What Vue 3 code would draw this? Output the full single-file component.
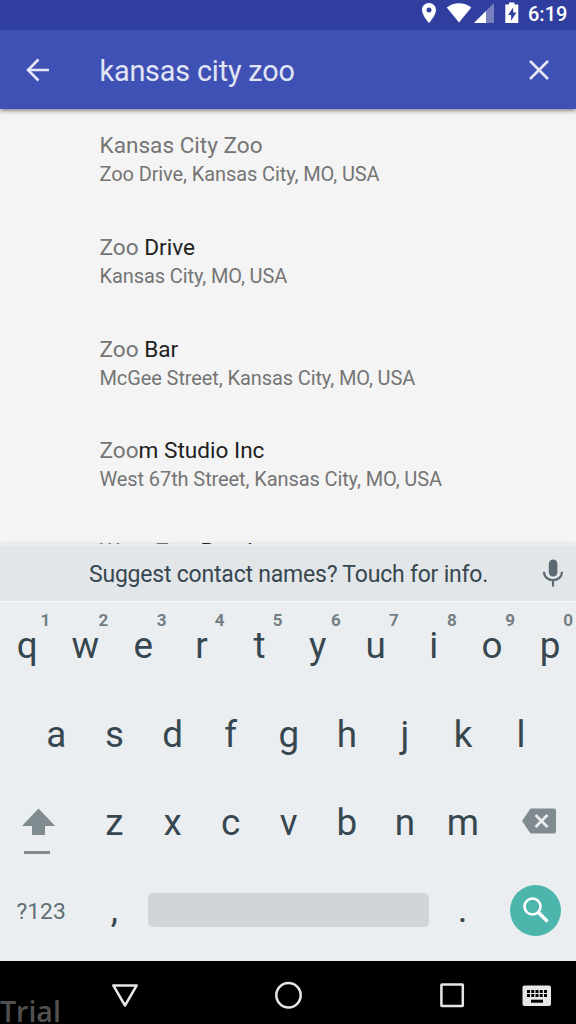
<script setup>
const results = [
  { match: 'Kansas City Zoo', rest: '', address: 'Zoo Drive, Kansas City, MO, USA' },
  { match: 'Zoo ', rest: 'Drive', address: 'Kansas City, MO, USA' },
  { match: 'Zoo ', rest: 'Bar', address: 'McGee Street, Kansas City, MO, USA' },
  { match: 'Zoo', rest: 'm Studio Inc', address: 'West 67th Street, Kansas City, MO, USA' },
  { match: 'West Zoo ', rest: 'Road', address: '' },
]
const topRow = [...'qwertyuiop']
const middleRow = [...'asdfghjkl']
const bottomRow = [...'zxcvbnm']
const hintFor = (i) => (i + 1) % 10
</script>

<template>
  <div class="screen">
    <div class="status">
      <svg class="status-icons" width="128" height="30" viewBox="0 0 128 30">
        <path fill="#fff" fill-rule="evenodd" d="M29 3c-4 0-7 3.100-7 7 0 5.200 7 13 7 13s7-7.800 7-13c0-3.900-3-7-7-7zm0 4.600a2.500 2.500 0 1 1 0 5 2.500 2.500 0 0 1 0-5z" />
        <path fill="#fff" d="M46.700 7.400C53.500 1.700 64.500 1.700 71.300 7.400L59 22.500z" />
        <path fill="#7881bd" d="M94 3v20H74z" />
        <path fill="#fff" d="M86 11v12H74z" />
        <path fill="#fff" fill-rule="evenodd" d="M109 2.500h5.500v2h3.800V23h-13V4.500h3.700zM113.200 7.300l-5 7.700h2.900v5.800l5.300-8.300h-3.200z" />
      </svg>
      <span class="time">6:19</span>
    </div>
    <header class="search">
      <svg class="back" width="24" height="24" viewBox="0 0 24 24"><path d="M12.500 1.500 2 12l10.500 10.500M2 12h21" /></svg>
      <span class="query">kansas city zoo</span>
      <svg class="close" width="20" height="20" viewBox="0 0 20 20"><path d="m1 1 18 18M19 1 1 19" /></svg>
    </header>
    <main class="results">
      <div v-for="(r, i) in results" :key="i" class="result">
        <div class="title">{{ r.match }}<span class="rest">{{ r.rest }}</span></div>
        <div v-if="r.address" class="address">{{ r.address }}</div>
      </div>
    </main>
    <section class="keyboard">
      <div class="suggest">
        <span class="suggest-text">Suggest contact names? Touch for info.</span>
        <svg class="mic" width="22" height="28" viewBox="0 0 22 28">
          <rect x="6.800" y="0.500" width="8.600" height="17" rx="4.300" fill="#5b6a71" />
          <path d="M2 12.800c0 5 4 8.300 9 8.300s9-3.300 9-8.300M11 21v6.500" fill="none" stroke="#5b6a71" stroke-width="2.200" />
        </svg>
      </div>
      <div class="row top">
        <div v-for="(k, i) in topRow" :key="k" class="key">{{ k }}<span class="hint">{{ hintFor(i) }}</span></div>
      </div>
      <div class="row middle">
        <div v-for="k in middleRow" :key="k" class="key">{{ k }}</div>
      </div>
      <div class="row">
        <div class="shift">
          <svg width="34" height="46" viewBox="0 0 34 46"><path fill="#808b8f" d="M16.500 0.500 33.200 18H23v9H10v-9H0zM2 43h26v3H2z" /></svg>
        </div>
        <div v-for="k in bottomRow" :key="k" class="key">{{ k }}</div>
        <div class="delete">
          <svg width="34" height="26" viewBox="0 0 34 26">
            <path fill="#808b8f" d="M9.500.5H32q2 0 2 2v21q0 2-2 2H9.500q-1 0-1.700-1L0 13 7.800 1.500q.7-1 1.700-1z" />
            <path d="m13.500 7 12 12m0-12-12 12" stroke="#ebeef1" stroke-width="2.600" />
          </svg>
        </div>
      </div>
      <div class="row last">
        <div class="symbols">?123</div>
        <div class="key">,</div>
        <div class="space"></div>
        <div class="key period">.</div>
        <div class="enter">
          <svg width="26" height="26" viewBox="0 0 26 26"><circle cx="9.500" cy="9.500" r="8" fill="none" stroke="#fff" stroke-width="2.700" /><path d="m15.200 15.200 9.300 9.300" stroke="#fff" stroke-width="3.400" /></svg>
        </div>
      </div>
    </section>
    <nav class="nav">
      <span class="trial">Trial</span>
      <svg width="576" height="63" viewBox="0 0 576 63">
        <g fill="none" stroke="#e6e6e6" stroke-width="2.500" stroke-linejoin="round">
          <path d="M113.300 24.400h23.400L125 44.500z" />
          <circle cx="288.500" cy="34.200" r="12.200" />
          <rect x="441.400" y="23.600" width="21.400" height="21.400" rx="0.500" />
        </g>
        <rect x="522.500" y="24.500" width="28.500" height="20.500" rx="2" fill="#e6e6e6" />
        <g stroke="#000" stroke-width="3" fill="none">
          <path d="M527 30.500h20M527 34.500h20" stroke-dasharray="3 1.250" />
          <path d="M531 40.200h12" />
        </g>
      </svg>
    </nav>
  </div>
</template>

<style>
body { background: #000; }
</style>

<style scoped>
.screen {
  width: 576px;
  height: 1024px;
  display: flex;
  flex-direction: column;
  overflow: hidden;
  font-family: Roboto, sans-serif;
  background: #f4f4f4;
}
.status { flex: 0 0 30px; display: flex; justify-content: flex-end; position: relative; z-index: 2; background: #303f9f; }
.time { width: 48px; font-size: 20px; line-height: 29px; font-weight: 500; color: #fff; }
.search {
  flex: 0 0 79px;
  display: flex;
  align-items: center;
  box-sizing: border-box;
  padding: 0 27px 0 26px;
  background: #3f51b5;
  box-shadow: 0 1px 5px rgba(0, 0, 0, .6);
  z-index: 1;
}
.back, .close { fill: none; stroke: #e6e7f6; stroke-width: 2.600; }
.query { flex: 1; margin: 2px 0 0 49.500px; font-size: 28.800px; letter-spacing: -.18px; color: #e2e5f4; }
.results { flex: 0 0 435px; overflow: hidden; padding: 22.200px 0 0 99.500px; box-sizing: border-box; }
.result { height: 101.700px; white-space: nowrap; }
.result:last-child { margin-top: -.9px; }
.title { font-size: 22.600px; line-height: 30px; color: #757575; }
.rest { color: #212121; }
.address { margin-top: -1px; font-size: 20px; line-height: 28px; letter-spacing: -.1px; color: #757575; }
.keyboard { flex: 0 0 417px; background: #ebeef1; color: #37474f; box-shadow: 0 0 4px rgba(0, 0, 0, .12); z-index: 1; }
.suggest {
  height: 58px;
  box-sizing: border-box;
  display: flex;
  align-items: center;
  border-top: 2px solid #eaedef;
  border-bottom: 1px solid #f7f9fa;
  background: #e2e6e9;
}
.suggest-text { margin: 2px 0 0 89px; width: 453px; font-size: 23px; letter-spacing: -.21px; white-space: nowrap; }
.mic { margin-top: -1px; }
.row { height: 88.400px; display: flex; align-items: center; }
.top { margin-left: -1.900px; width: 582px; }
.middle { padding-left: 27.300px; }
.last { margin-top: -.9px; }
.key { position: relative; flex: 0 0 58.100px; text-align: center; font-size: 36.800px; line-height: 44px; }
.hint { position: absolute; right: 6px; top: -14px; font-size: 17px; line-height: 20px; font-weight: 700; color: #737f84; }
.shift { flex: 0 0 85.400px; box-sizing: border-box; padding: 16px 0 0 22px; }
.shift svg, .delete svg, .enter svg { display: block; }
.delete { margin: -3px 0 0 29.500px; }
.symbols { flex: 0 0 85.400px; box-sizing: border-box; padding: 2px 0 0 16.500px; font-size: 22.800px; color: #5f6e74; }
.space { flex: 0 0 281px; height: 34px; margin-left: 4.500px; border-radius: 5px; background: #d1d5d8; }
.period { margin-left: 4.500px; }
.enter {
  flex: 0 0 51px;
  height: 51px;
  margin-left: 18.500px;
  display: flex;
  align-items: center;
  justify-content: center;
  border-radius: 50%;
  background: #4db6ac;
}
.nav { flex: 0 0 63px; position: relative; z-index: 2; background: #000; }
.nav svg { display: block; }
.trial { position: absolute; left: 0; top: 32px; font: 600 28.500px/36px "Open Sans", sans-serif; color: #515151; }
</style>
